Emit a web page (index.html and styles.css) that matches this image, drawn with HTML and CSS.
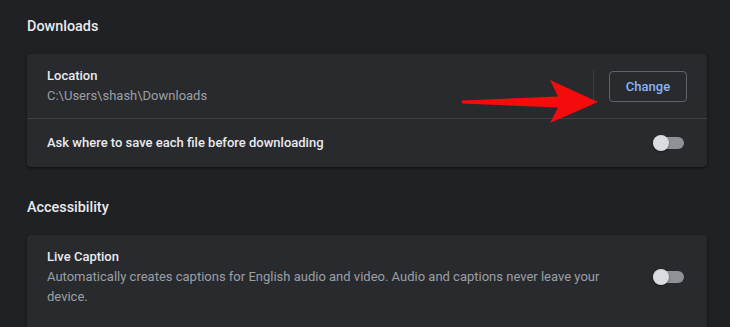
FILE: index.html
```html
<!DOCTYPE html>
<html lang="en">
<head>
<meta charset="utf-8">
<title>Settings</title>
<link rel="stylesheet" href="styles.css">
</head>
<body>
<main class="page">
  <h2 class="section-title first">Downloads</h2>
  <div class="card">
    <div class="row row-tall">
      <div class="row-text">
        <div class="label">Location</div>
        <div class="secondary">C:\Users\shash\Downloads</div>
      </div>
      <div class="sep"></div>
      <button class="btn">Change</button>
    </div>
    <div class="divider"></div>
    <div class="row">
      <div class="row-text">
        <div class="label">Ask where to save each file before downloading</div>
      </div>
      <div class="toggle"><span class="knob"></span></div>
    </div>
  </div>

  <h2 class="section-title">Accessibility</h2>
  <div class="card card-open">
    <div class="row row-caption">
      <div class="row-text narrow">
        <div class="label">Live Caption</div>
        <div class="secondary">Automatically creates captions for English audio and video. Audio and captions never leave your device.</div>
      </div>
      <div class="toggle"><span class="knob"></span></div>
    </div>
  </div>

  <svg class="arrow" width="140" height="46" viewBox="0 0 140 46" aria-hidden="true">
    <polygon points="0,20.5 96,16.5 88,0 136,22 88,43 96,27.5 0,23.5" fill="#f40c0c"/>
  </svg>
</main>
</body>
</html>
```

FILE: styles.css
```css
* { box-sizing: border-box; }
html, body {
  margin: 0;
  padding: 0;
  background: #202124;
  height: 100%;
  overflow: hidden;
}
body {
  font-family: Roboto, "Liberation Sans", Arial, sans-serif;
  font-size: 13px;
  color: #e8eaed;
}
.page {
  position: relative;
  padding: 0 23px 0 27px;
}
.section-title {
  margin: 31px 0 17px;
  font-size: 14.4px;
  font-weight: 500;
  line-height: 20px;
  color: #e8eaed;
}
.section-title.first { margin-top: 17px; }
.card {
  background: #292a2d;
  border-radius: 4px;
  box-shadow: 0 1px 2px rgba(0,0,0,0.3), 0 1px 3px 1px rgba(0,0,0,0.15);
}
.card-open { padding-bottom: 40px; }
.row {
  display: flex;
  align-items: center;
  min-height: 48px;
  padding: 0 20px;
}
.row-tall { min-height: 64px; }
.row-caption { padding-top: 12px; padding-bottom: 12px; }
.row-text { flex: 1; line-height: 20px; }
.row-text.narrow { flex: 0 1 560px; margin-right: auto; }
.label { font-weight: 500; color: #e8eaed; }
.secondary { color: #9aa0a6; }
.divider { height: 1px; background: #3f4043; }
.sep {
  width: 1px;
  height: 32px;
  background: #3c3d40;
  margin-right: 15px;
}
.btn {
  font-family: inherit;
  font-size: 13px;
  font-weight: 500;
  color: #8ab4f8;
  background: transparent;
  border: 1px solid #5f6368;
  border-radius: 4px;
  width: 78px;
  height: 31px;
  padding: 0;
}
.toggle {
  position: relative;
  width: 31px;
  height: 12px;
  margin-right: 3px;
  border-radius: 6px;
  background: #8e9196;
}
.knob {
  position: absolute;
  left: 0;
  top: -2px;
  width: 16px;
  height: 16px;
  border-radius: 50%;
  background: #dadce0;
  box-shadow: 0 1px 2px rgba(0,0,0,0.4);
}
.arrow {
  position: absolute;
  left: 462px;
  top: 63px;
}
```
